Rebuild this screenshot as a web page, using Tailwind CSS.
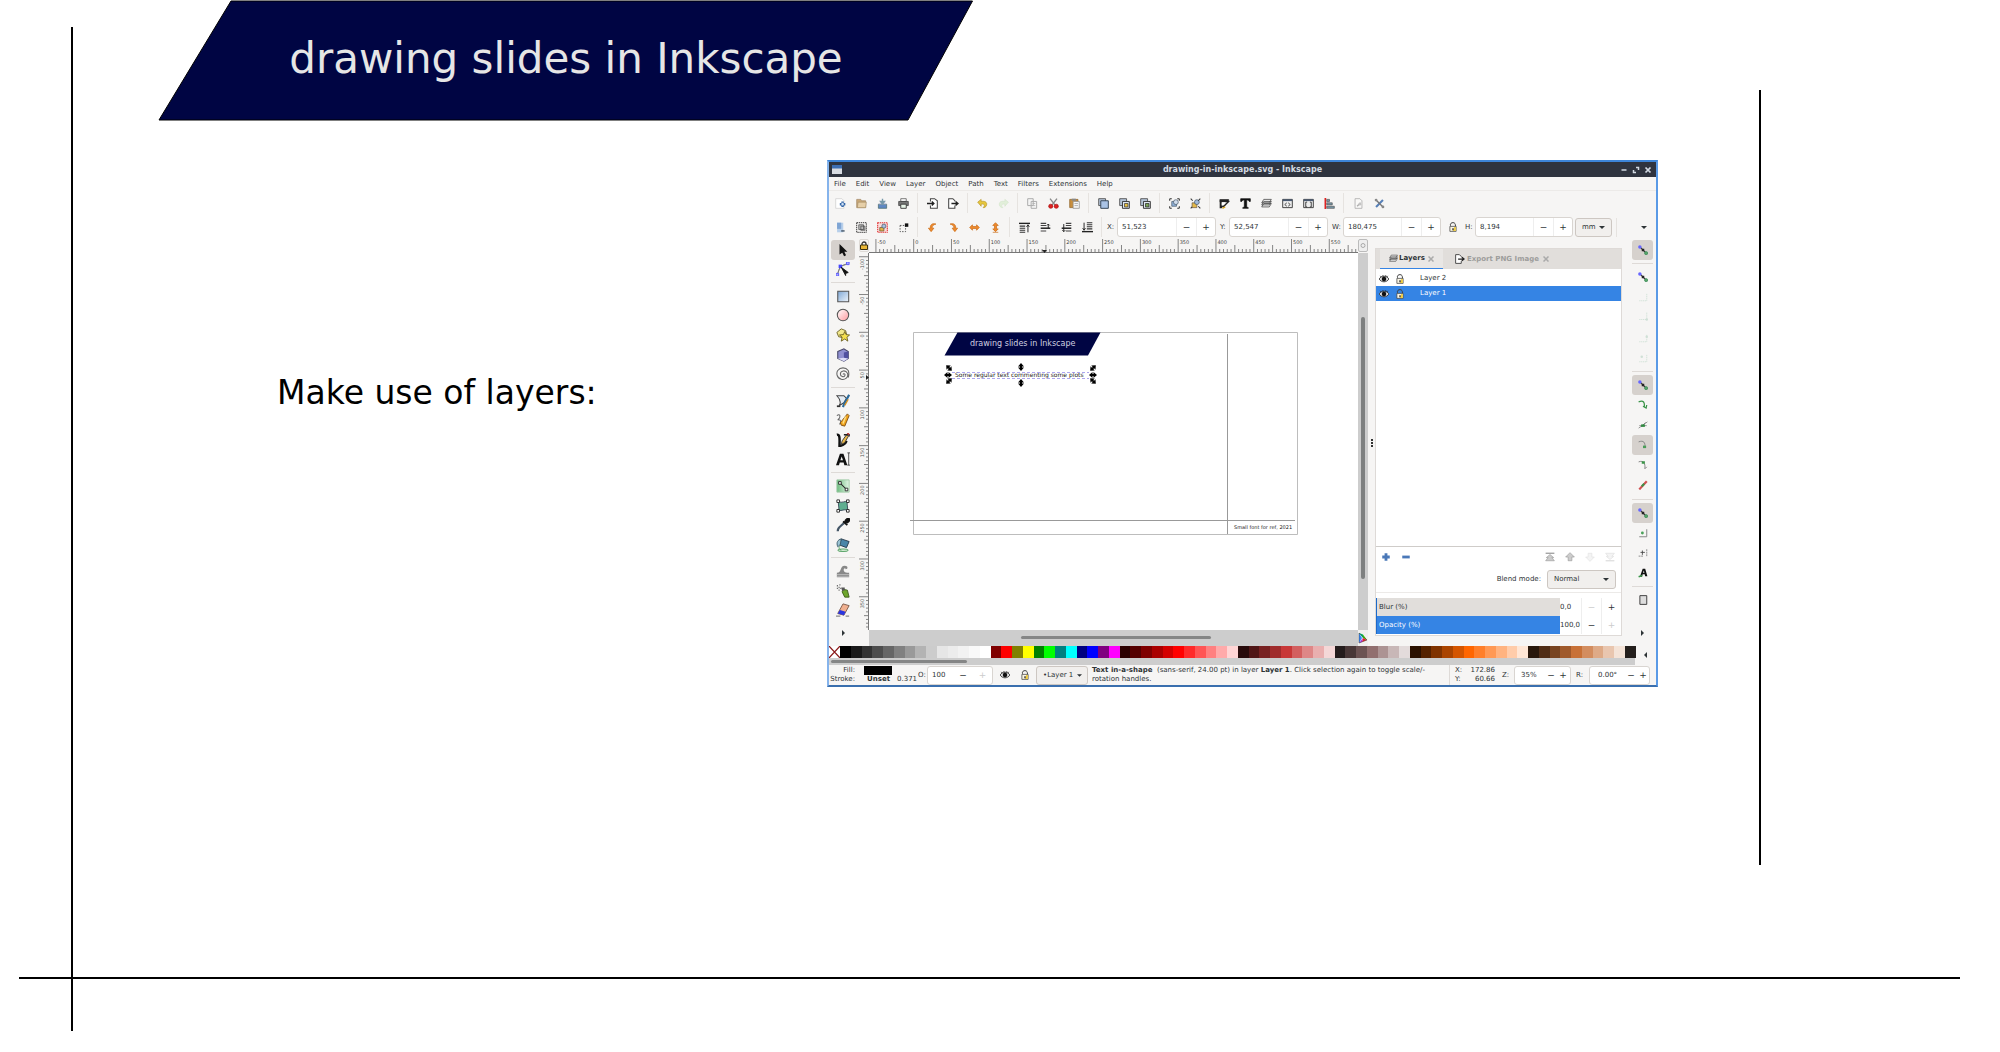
<!DOCTYPE html>
<html lang="en">
<head>
<meta charset="utf-8">
<title>drawing slides in Inkscape</title>
<script src="https://cdn.jsdelivr.net/npm/@tailwindcss/browser@4"></script>
</head>
<body class="relative min-h-screen overflow-x-hidden bg-white font-['DejaVu_Sans',sans-serif] text-black">

<!-- slide guide lines -->
<div class="absolute top-[27px] bottom-[21px] left-[71px] w-[2px] bg-black"></div>
<div class="absolute top-[90px] right-[239px] bottom-[187px] w-[2px] bg-black"></div>
<div class="absolute right-[40px] bottom-[73px] left-[19px] h-[2px] bg-black"></div>

<header class="relative ml-[158px] flex h-[121px] w-[816px] items-center justify-center">
  <svg class="absolute inset-0 h-full w-full" viewBox="0 0 816 121" aria-hidden="true"><path d="M73 1H814.500L750 120H1z" fill="#000543" stroke="#000" stroke-width="1"/></svg>
  <h1 class="relative pb-1 text-[42px] leading-[48px] whitespace-nowrap text-[#e6e6e6]">drawing slides in Inkscape</h1>
</header>

<main class="flex pt-[39px] pr-[342px] pl-[277px]">
  <p class="w-[550px] shrink-0 pt-[213px] text-[33px] leading-[40px]">Make use of layers:</p>

  <section class="min-w-0 flex-1 border-2 border-[#5a9ae6] border-t-[#3d85d8] border-b-[#3a6fae] border-l-[#86b4ec] bg-[#f6f5f4] text-[7px] leading-[9px] text-[#2e3436]">
    <!-- title bar -->
    <div class="relative flex h-[15px] items-center justify-center bg-[#2f343f] text-[8px] font-bold text-[#d3dae3]">
      <svg class="absolute left-[3px] h-[9px] w-[10px]" viewBox="0 0 10 9"><path d="M0 0h10v9H0z" fill="#d8dce2"/><path d="M0 0h10v3.500H0z" fill="#3d6fb4"/></svg>
      <span>drawing-in-inkscape.svg - Inkscape</span>
      <div class="absolute right-[4px] flex gap-[4px]" data-bar="winmin winmax winclose" data-kind="win"></div>
    </div>
    <nav class="flex h-[14px] items-center gap-[10px] border-b border-[#eceae8] pt-[2px] pl-[5px]">
      <button>File</button><button>Edit</button><button>View</button><button>Layer</button><button>Object</button><button>Path</button><button>Text</button><button>Filters</button><button>Extensions</button><button>Help</button>
    </nav>
    <!-- command bar -->
    <div class="flex h-[24px] items-center pl-[1px]" data-kind="cmd" data-bar="new open save print | import export | undo redo | copy cut paste | zoomsel zoomdraw zoompage | group ungroup | fill text layers xml selectors align | docprops prefs"></div>
    <!-- tool controls -->
    <div class="flex h-[24px] items-center pl-[1px]">
      <div class="flex h-full items-center" data-kind="cmd" data-bar="selall selbox seltouch deselect | rotl rotr fliph flipv | top raise lower bottom |"></div>
      <label for="fx" class="w-[11px] pl-[1px]">X:</label>
      <div class="flex h-[20px] w-[99px] rounded-[3px] border border-[#d9d5d1] bg-white"><input id="fx" value="51,523" class="w-[58px] pl-[4px] outline-none"><button class="w-[20px] border-l border-[#eee] text-[9px]">−</button><button class="w-[19px] border-l border-[#eee] text-[9px]">+</button></div>
      <label for="fy" class="w-[13px] pl-[4px]">Y:</label>
      <div class="flex h-[20px] w-[99px] rounded-[3px] border border-[#d9d5d1] bg-white"><input id="fy" value="52,547" class="w-[58px] pl-[4px] outline-none"><button class="w-[20px] border-l border-[#eee] text-[9px]">−</button><button class="w-[19px] border-l border-[#eee] text-[9px]">+</button></div>
      <label for="fw" class="w-[15px] pl-[4px]">W:</label>
      <div class="flex h-[20px] w-[98px] rounded-[3px] border border-[#d9d5d1] bg-white"><input id="fw" value="180,475" class="w-[57px] pl-[4px] outline-none"><button class="w-[20px] border-l border-[#eee] text-[9px]">−</button><button class="w-[19px] border-l border-[#eee] text-[9px]">+</button></div>
      <div class="flex w-[24px] justify-center" data-kind="small" data-bar="unlock"></div>
      <label for="fh" class="w-[10px]">H:</label>
      <div class="flex h-[20px] w-[98px] rounded-[3px] border border-[#d9d5d1] bg-white"><input id="fh" value="8,194" class="w-[57px] pl-[4px] outline-none"><button class="w-[20px] border-l border-[#eee] text-[9px]">−</button><button class="w-[19px] border-l border-[#eee] text-[9px]">+</button></div>
      <div class="relative ml-[2px] flex items-center">
        <select aria-label="Unit" class="h-[19px] w-[37px] appearance-none rounded-[3px] border border-[#cdc7c2] bg-[#f1efed] pl-[6px]"><option>mm</option></select>
        <svg class="pointer-events-none absolute right-[7px] h-[3px] w-[6px]" viewBox="0 0 6 3"><path d="M0 0h6L3 3z" fill="#2e3436"/></svg>
      </div>
      <span class="ml-[4px] h-[19px] w-px bg-[#e6e3e0]"></span>
      <svg class="mr-[9px] ml-auto h-[3px] w-[6px]" viewBox="0 0 6 3"><path d="M0 0h6L3 3z" fill="#2e3436"/></svg>
    </div>

    <!-- work area -->
    <div class="flex h-[407px]">
      <div class="flex w-[28px] shrink-0 flex-col pt-px pl-[2px]" data-kind="tool" data-bar="*pointer node | rect circle star box3d spiral | pencil bezier calli texttool | gradient mesh dropper bucket | tweak spray eraser > "></div>

      <div class="flex min-w-0 flex-1 flex-col">
        <div class="flex h-[14px]">
          <button aria-label="Lock guides" class="ml-[2px] flex h-[13px] w-[10px] items-center justify-center rounded-[2px] border border-[#dedad6]"><svg class="h-[9px] w-[8px]" viewBox="0 0 8 9"><path d="M2 4V3a2 2 0 0 1 4 0v1" fill="none" stroke="#333" stroke-width="1.300"/><path d="M.5 4h7v4.500h-7z" fill="#e8b636" stroke="#3a3010"/></svg></button>
          <svg id="hruler" class="h-full min-w-0 flex-1"></svg>
          <button aria-label="Zoom" class="flex h-[13px] w-[10px] items-center justify-center rounded-[2px] border border-[#bbb] bg-[#eee]"><svg class="h-[6px] w-[6px]" viewBox="0 0 6 6"><circle cx="3" cy="2.500" r="2" fill="none" stroke="#999" stroke-width=".8"/></svg></button>
        </div>
        <div class="flex min-h-0 flex-1">
          <svg id="vruler" class="h-full w-[12px] shrink-0"></svg>
          <div class="flex min-w-0 flex-1 flex-col">
            <svg class="min-h-0 w-full flex-1 bg-white" font-family="DejaVu Sans, sans-serif">
              <path d="M44.500 79.500H428.500V281.500H44.500z" fill="none" stroke="#bdbdbd"/>
              <path d="M358.500 81V281M41 267.500H426" fill="none" stroke="#999"/>
              <path d="M88.500 79.500H231.500L219 102.500H75.500z" fill="#000543"/>
              <text x="101" y="93" font-size="8" fill="#d0d0e0">drawing slides in Inkscape</text>
              <text x="86" y="124" font-size="6" fill="#222">Some regular text commenting some plots</text>
              <path d="M83 119.500H220M83 125.500H220" stroke="#8a80e8" stroke-width=".7" stroke-dasharray="3 2"/>
              <g id="handles"></g>
              <text x="365" y="276" font-size="5" fill="#222">Small font for ref, 2021</text>
            </svg>
            <div class="h-[16px] bg-[#cdcdcd] pt-[6px]"><div class="ml-[31%] h-[3px] w-[39%] rounded-full bg-[#858686]"></div></div>
          </div>
          <div class="flex w-[10px] shrink-0 flex-col bg-[#cdcdcd]">
            <div class="mx-auto mt-[64px] h-[262px] w-[4px] rounded-full bg-[#7e8080]"></div>
            <svg class="mt-auto h-[16px] w-[10px] bg-[#f0efee]" viewBox="0 0 10 16"><path d="M1 3l3 5-3 5z" fill="#38f"/><path d="M1 3l4 1.500L5 8z" fill="#0b6"/><path d="M5 4.500L9 10 5 8z" fill="#4c0"/><path d="M9 10l-5 2 1-4z" fill="#e22"/><path d="M1 13l4-5-1 4z" fill="#a3d"/><path d="M1 3l8 7-8 3z" fill="none" stroke="#333" stroke-width=".5"/></svg>
          </div>
        </div>
      </div>

      <div class="flex w-[7px] shrink-0 items-center justify-center"><svg class="h-[8px] w-[2px]" viewBox="0 0 2 8"><path d="M0 0h2v2H0zM0 3h2v2H0zM0 6h2v2H0z" fill="#333"/></svg></div>

      <!-- layers dialog -->
      <div class="mt-[9px] mb-[10px] flex w-[247px] shrink-0 flex-col border border-[#dedad7] bg-white">
        <div class="flex h-[20px] bg-[#e1dedb] pl-[4px] font-bold">
          <button class="flex w-[63px] items-center justify-center gap-[1px] border-b border-[#3584e4] bg-[#e9e7e5]"><svg class="h-[9px] w-[9px]" viewBox="0 0 16 16"><use href="#i-layers"/></svg>Layers<svg class="ml-[2px] h-[6px] w-[6px]" viewBox="0 0 6 6"><path d="M.5 .5l5 5M5.500 .5l-5 5" stroke="#aaa" stroke-width="1.500"/></svg></button>
          <button class="ml-[12px] flex items-center gap-[2px] text-[#9d9d9b]"><svg class="h-[10px] w-[10px]" viewBox="0 0 16 16"><use href="#i-export"/></svg>Export PNG Image<svg class="ml-[2px] h-[6px] w-[6px]" viewBox="0 0 6 6"><path d="M.5 .5l5 5M5.500 .5l-5 5" stroke="#aaa" stroke-width="1.500"/></svg></button>
        </div>
        <ul class="flex-1 border-b border-[#cfccc9] pt-[2px]">
          <li class="flex h-[15px] items-center"><div class="flex w-[44px] gap-[6px] pl-[3px]" data-kind="small" data-bar="eye unlock"></div>Layer 2</li>
          <li class="flex h-[15px] items-center bg-[#3584e4] text-white"><div class="flex w-[44px] gap-[6px] pl-[3px]" data-kind="small" data-bar="eye unlock"></div>Layer 1</li>
        </ul>
        <div class="flex h-[19px] items-center pl-[5px]">
          <div class="flex gap-[10px]" data-kind="small" data-bar="plus minus"></div>
          <div class="mr-[6px] ml-auto flex gap-[10px]" data-kind="small" data-bar="ltop lup ldown lbottom"></div>
        </div>
        <div class="flex h-[27px] items-center justify-end border-b border-[#eceae8] pr-[5px]">
          <label for="blend" class="mr-[6px]">Blend mode:</label>
          <div class="relative flex items-center">
            <select id="blend" class="h-[19px] w-[69px] appearance-none rounded-[3px] border border-[#cdc7c2] bg-[#f1efed] pl-[6px]"><option>Normal</option></select>
            <svg class="pointer-events-none absolute right-[7px] h-[3px] w-[6px]" viewBox="0 0 6 3"><path d="M0 0h6L3 3z" fill="#2e3436"/></svg>
          </div>
        </div>
        <div class="mt-[5px] flex h-[18px]"><label for="blur" class="flex w-[184px] items-center border-l border-[#1b6acb] bg-[#e1dedb] pl-[2px]">Blur (%)</label><input id="blur" value="0,0" class="w-[21px] outline-none"><button class="w-[20px] border-l border-[#eee] text-[9px] text-[#ccc]">−</button><button class="w-[20px] border-l border-[#eee] text-[9px]">+</button></div>
        <div class="mb-px flex h-[18px]"><label for="opac" class="flex w-[184px] items-center border-l border-[#1b6acb] bg-[#3584e4] pl-[2px] text-white">Opacity (%)</label><input id="opac" value="100,0" class="w-[21px] outline-none"><button class="w-[20px] border-l border-[#eee] text-[9px]">−</button><button class="w-[20px] border-l border-[#eee] text-[9px] text-[#ccc]">+</button></div>
      </div>

      <div class="ml-[10px] flex w-[24px] shrink-0 flex-col pt-px pr-[3px]" data-kind="snap" data-bar="*snap | snap corner1 corner2 corner3 corner4 | *snap curve cross *curveg curveh slash | *snap cbox cplus atext | page >>"></div>
    </div>

    <!-- palette -->
    <div class="flex h-[19px]">
      <div class="flex min-w-0 flex-1 flex-col">
        <div id="palette" class="flex h-[12px]"><svg class="h-[12px] w-[11px] shrink-0 bg-white" viewBox="0 0 11 12"><path d="M0 0l11 12M11 0L0 12" stroke="#8b1a1a" stroke-width="1.200"/></svg></div>
        <div class="flex-1 bg-[#cdcdcd] pt-[2px]"><div class="ml-[2px] h-[3px] w-[136px] rounded-full bg-[#858686]"></div></div>
      </div>
      <svg class="mt-[6px] mr-[9px] ml-[9px] h-[6px] w-[3px]" viewBox="0 0 3 6"><path d="M3 0v6L0 3z" fill="#2e3436"/></svg>
    </div>

    <!-- status bar -->
    <div class="flex h-[20px] items-center overflow-hidden">
      <div class="grid shrink-0 grid-cols-[26px_32px_21px] items-center gap-x-[5px]">
        <span class="text-right">Fill:</span><span class="h-[9px] w-[28px] justify-self-end bg-black"></span><span></span>
        <span class="justify-self-end">Stroke:</span><b class="justify-self-end pr-[2px]">Unset</b><span>0.371</span>
      </div>
      <label for="op" class="w-[9px] shrink-0">O:</label>
      <div class="flex h-[19px] w-[66px] shrink-0 rounded-[3px] border border-[#d9d5d1] bg-white"><input id="op" value="100" class="w-[25px] pl-[4px] outline-none"><button class="w-[20px] text-[9px]">−</button><button class="w-[19px] text-[9px] text-[#ccc]">+</button></div>
      <div class="ml-[7px] flex w-[36px] shrink-0 gap-[10px]" data-kind="small" data-bar="eye unlock"></div>
      <div class="relative flex shrink-0 items-center">
        <select aria-label="Current layer" class="h-[19px] w-[52px] appearance-none rounded-[3px] border border-[#cdc7c2] bg-[#f1efed] pl-[6px]"><option>•Layer 1</option></select>
        <svg class="pointer-events-none absolute right-[6px] h-[3px] w-[5px]" viewBox="0 0 6 3"><path d="M0 0h6L3 3z" fill="#2e3436"/></svg>
      </div>
      <p class="ml-[4px] flex-1 whitespace-nowrap"><b>Text in-a-shape</b>&nbsp; (sans-serif, 24.00 pt) in layer <b>Layer 1</b>. Click selection again to toggle scale/-<br>rotation handles.</p>
      <div class="grid h-full w-[53px] shrink-0 grid-cols-[10px_30px] content-center border-l border-[#dedad7] pl-[5px]"><span>X:</span><span class="text-right">172.86</span><span>Y:</span><span class="text-right">60.66</span></div>
      <label for="zoom" class="w-[12px]">Z:</label>
      <div class="flex h-[19px] w-[57px] shrink-0 rounded-[3px] border border-[#d9d5d1] bg-white"><input id="zoom" value="35%" class="w-[30px] pl-[6px] outline-none"><button class="w-[12px] text-[9px]">−</button><button class="w-[12px] text-[9px]">+</button></div>
      <label for="rot" class="w-[18px] pl-[5px]">R:</label>
      <div class="mr-[6px] flex h-[19px] w-[61px] shrink-0 rounded-[3px] border border-[#d9d5d1] bg-white"><input id="rot" value="0.00°" class="w-[35px] pl-[8px] outline-none"><button class="w-[12px] text-[9px]">−</button><button class="w-[12px] text-[9px]">+</button></div>
    </div>
  </section>
</main>

<svg class="absolute h-0 w-0" aria-hidden="true">
  <linearGradient id="gb" x1="0" y1="0" x2="1" y2="1"><stop stop-color="#7fa8d6"/><stop offset="1" stop-color="#eef4fb"/></linearGradient>
  <linearGradient id="gr" x1="0" y1="0" x2="1" y2="1"><stop stop-color="#fff"/><stop offset="1" stop-color="#ff9a9f"/></linearGradient>
  <linearGradient id="gg" x1="0" y1="0" x2="1" y2="0"><stop stop-color="#6dbb7e"/><stop offset="1" stop-color="#e2f5e5"/></linearGradient>
  <symbol id="i-layers" viewBox="0 0 16 16"><path d="M4 8h11l-3 5H1zM4 5h11l-3 5H1zM4 2h11l-3 5H1z" fill="#eee" stroke="#444" stroke-width="1.100"/></symbol>
  <symbol id="i-export" viewBox="0 0 16 16"><path d="M10 5V4L7 1H1v14h9v-4" fill="#fff" stroke="#444" stroke-width="1.500"/><path d="M5 8h9M11 5l3.500 3-3.500 3" fill="none" stroke="#222" stroke-width="2"/></symbol>
</svg>

<script>
const page = '<path d="M3 1h7l3 3v11H3z" fill="#fff" stroke="#555" stroke-width="1.2"/>';
const win = '<path d="M1 2h14v12H1z" fill="#eee" stroke="#333" stroke-width="1.3"/><path d="M1 2h14v2.500H1z" fill="#4a5a72"/>';
const zoomBack = '<path d="M1 1h10v10H1z" fill="#b8c8dc" stroke="#444" stroke-width="1.2"/><path d="M5 5h10v10H5z" fill="#dfe8f3" stroke="#333" stroke-width="1.4"/>';
const shapes = '<path d="M4 5h7v7H4z" fill="#8fb0d8" stroke="#456" /><circle cx="10" cy="6" r="3.500" fill="#cfdcec" stroke="#456"/>';
const corner = 'fill="none" stroke="#cfe0d6" stroke-width="1.4" stroke-dasharray="2 1"';
const icons = {
  winmin: '<path d="M3 8h10" stroke="#d3dae3" stroke-width="3"/>',
  winmax: '<path d="M8 3h5v5M8 13H3V8" fill="none" stroke="#d3dae3" stroke-width="3"/>',
  winclose: '<path d="M3 3l10 10M13 3L3 13" stroke="#d3dae3" stroke-width="3.500"/>',
  new: '<path d="M1 1h9l3 3v11H1z" fill="#fff" stroke="#ccc"/><path d="M11 5v8M7 9h8" stroke="#3567a8" stroke-width="3.500"/><path d="M11 7v4M9 9h4" stroke="#cfe0f5" stroke-width="1.8"/>',
  open: '<path d="M1 2h6l1 2h6v10H1z" fill="#c9a878" stroke="#a08560"/><path d="M3 6h12l-1 8H2z" fill="#e6cfa8" stroke="#a8906a"/>',
  save: '<path d="M2 9h12v6H2z" fill="#5f88c4" stroke="#466"/><path d="M2 9l2-2h8l2 2" fill="#ccd"/><path d="M8 1v4M5 5h6L8 9z" stroke="#79a" stroke-width="2" fill="#79a"/>',
  print: '<path d="M4 1h8v4H4z" fill="#fff" stroke="#444"/><path d="M1 5h14v6H1z" fill="#777" stroke="#333"/><path d="M4 9h8v6H4z" fill="#e8f4e8" stroke="#333" stroke-width="1.3"/>',
  import: '<path d="M5 5V1h6l4 3v11H5v-4" fill="#fff" stroke="#444" stroke-width="1.5"/><path d="M0 8h9M7 5l3 3-3 3" fill="none" stroke="#222" stroke-width="2"/>',
  export: '<use href="#i-export"/>',
  undo: '<path d="M1 6l5-4v3c5-1 9 1 8 5-1 4-4 4-5 4 3-3 2-6-3-5v3z" fill="#e6c63c" stroke="#b8962a"/>',
  redo: '<path d="M15 6l-5-4v3c-5-1-9 1-8 5 1 4 4 4 5 4-3-3-2-6 3-5v3z" fill="#e2efda" stroke="#d5e6cc"/>',
  copy: '<path d="M1 1h8v10H1zM6 5h8v10H6z" fill="#f4f4f4" stroke="#aaa" stroke-width="1.4"/><path d="M8 8h4M8 11h4" stroke="#aaa"/>',
  cut: '<path d="M3 1l7 9M13 1l-7 9" stroke="#888" stroke-width="2"/><ellipse cx="4" cy="12" rx="3" ry="3" fill="#d22" stroke="#a11"/><ellipse cx="12" cy="12" rx="3" ry="3" fill="#d22" stroke="#a11"/>',
  paste: '<path d="M1 2h12v12H1z" fill="#c98f3e" stroke="#8a6226"/><path d="M4 1h6v3H4z" fill="#888"/><path d="M6 5h9v10H6z" fill="#f4f4f4" stroke="#888"/><path d="M8 8h5M8 11h5" stroke="#999"/>',
  zoomsel: '<path d="M1 1h10v10H1z" fill="#b8c8dc" stroke="#444" stroke-width="1.2"/><path d="M4 4h11v11H4z" fill="#a9c3e6" stroke="#345" stroke-width="1.4"/>',
  zoomdraw: zoomBack + '<path d="M8 8h5v5H8z" fill="#e8c040" stroke="#333"/>',
  zoompage: zoomBack + '<path d="M8 8h5v5H8z" fill="#7aa65a" stroke="#222"/>',
  group: shapes + '<path d="M1 1h3M1 1v3M15 15h-3M15 15v-3M15 1h-3M15 1v3M1 15h3M1 15v-3" stroke="#333" stroke-width="1.5"/>',
  ungroup: '<path d="M3 7h7v7H3z" fill="#e3b84a" stroke="#654"/><circle cx="10" cy="6" r="3.500" fill="#9fb8da" stroke="#456"/><path d="M1 1l3 3M15 15l-3-3M15 1l-3 3M1 15l2-2" stroke="#333" stroke-width="1.5"/>',
  fill: '<path d="M1 2h13v4H1z" fill="#222"/><path d="M1 2v13h3l3-4H4V6h7l4-4z" fill="#222"/><path d="M4 6h6l-5 5H4z" fill="#fff"/><path d="M15 4L6 13" stroke="#222" stroke-width="2"/><path d="M5 15l4-2" stroke="#d9a520" stroke-width="2"/>',
  text: '<path d="M1 1h14v4h-1.500L12 3H9.700v10l2.300 1v1H4v-1l2.300-1V3H4L2.500 5H1z" fill="#111" stroke="#111"/>',
  layers: '<use href="#i-layers"/>',
  xml: win + '<path d="M7 7L4 9.500 7 12M9 7l3 2.500L9 12" fill="none" stroke="#333" stroke-width="1.2"/>',
  selectors: win + '<path d="M6 6H4v7h2M10 6h2v7h-2" fill="none" stroke="#333" stroke-width="1.3"/>',
  align: '<path d="M2 0v16" stroke="#d22" stroke-width="2.500"/><path d="M4 2h4v3H4zM4 7h8v3H4zM4 12h11v3H4z" fill="#79a" stroke="#555"/>',
  docprops: '<g opacity=".45">' + page + '<path d="M6 12l5-5" stroke="#555" stroke-width="2"/><circle cx="10" cy="9" r="2" fill="#888"/></g>',
  prefs: '<path d="M3 13L13 3" stroke="#567fb8" stroke-width="3"/><path d="M3 3l10 10" stroke="#777" stroke-width="2"/><circle cx="3" cy="3" r="2" fill="#888"/><circle cx="13" cy="13" r="2" fill="#888"/>',
  selall: '<path d="M3 1h9v14H3z" fill="#b7cfea"/><path d="M3 1h6v9H3z" fill="#7fa5d4"/><path d="M9 12h5v2H9z" fill="#456"/>',
  selbox: '<path d="M1 1h14v14H1z" fill="none" stroke="#222" stroke-width="1.3" stroke-dasharray="2 1"/><path d="M4 4h7v7H4zM7 6h6v6H7z" fill="#bbb" stroke="#444"/>',
  seltouch: '<path d="M1 1h14v14H1z" fill="#fbdcdc" stroke="#e03030" stroke-width="1.5" stroke-dasharray="2 1"/><path d="M4 8h6v5H4z" fill="#e2b646" stroke="#653"/><circle cx="10" cy="6" r="3" fill="#a9c0de" stroke="#456"/>',
  deselect: '<path d="M3 5h8v9H3z" fill="none" stroke="#444" stroke-width="1.3" stroke-dasharray="2 2"/><path d="M10 2h5v5h-5z" fill="#111"/>',
  rotl: '<path d="M13 3C8 1 4 4 5 9H2l4 5 4-5H7.500C7 6 9 4 13 3z" fill="#ef8a2c" stroke="#c96a14"/>',
  rotr: '<path d="M3 3c5-2 9 1 8 6h3l-4 5-4-5h2.500C9 6 7 4 3 3z" fill="#ef8a2c" stroke="#c96a14"/>',
  fliph: '<path d="M1 8l4-4v2.500h6V4l4 4-4 4V9.500H5V12z" fill="#ef8a2c" stroke="#c96a14"/>',
  flipv: '<path d="M8 1l4 4H9.500v5H12l-4 4-4-4h2.500V5H4z" fill="#ef8a2c" stroke="#c96a14"/><path d="M4 15h8" stroke="#c96a14"/>',
  top: '<path d="M0 2h16" stroke="#222" stroke-width="2"/><path d="M1 6h8M1 9h8M1 12h8M1 15h8" stroke="#333" stroke-width="1.6"/><path d="M13 15V5M11 7l2-3 2 3" stroke="#222" stroke-width="1.4" fill="none"/>',
  raise: '<path d="M1 2h8M1 5h8M1 13h8" stroke="#444" stroke-width="1.6"/><path d="M1 9h14" stroke="#111" stroke-width="2"/><path d="M12 9V3M10 5l2-2 2 2" stroke="#222" stroke-width="1.4" fill="none"/>',
  lower: '<path d="M7 2h8M7 5h8M7 13h8" stroke="#444" stroke-width="1.6"/><path d="M1 9h14" stroke="#111" stroke-width="2"/><path d="M4 3v11M2 12l2 2 2-2" stroke="#222" stroke-width="1.4" fill="none"/>',
  bottom: '<path d="M0 14h16" stroke="#222" stroke-width="2"/><path d="M7 1h8M7 4h8M7 7h8M7 10h8" stroke="#333" stroke-width="1.6"/><path d="M3 1v10M1 9l2 3 2-3" stroke="#222" stroke-width="1.4" fill="none"/>',
  unlock: '<path d="M4 6c-1-4 2-5 4-5 3 0 4 2 4 6" fill="none" stroke="#444" stroke-width="1.6"/><path d="M3 7h10v8H3z" fill="#f8f4e4" stroke="#444" stroke-width="1.2"/><path d="M10 8h2.500v6.500H8z" fill="#f0cc40"/><path d="M7 10h2v3H7z" fill="#222"/>',
  eye: '<path d="M0 8c4-6 12-6 16 0-4 6-12 6-16 0z" fill="#ddd" stroke="#333" stroke-width="1.4"/><circle cx="8" cy="8" r="3.600" fill="#111"/><path d="M2 3l2 2M6 2l1 2M11 2l-1 2M14 3l-2 2" stroke="#222" stroke-width="1.4"/>',
  pointer: '<path d="M4 1l9 9H9.500l2 4-2.300 1-2-4L4 13z" fill="#111"/>',
  node: '<path d="M2 14C3 7 6 3 14 2M5 5l9-3M5 5L2 13" fill="none" stroke="#777"/><path d="M3 3h4v4H3z" fill="#44f"/><path d="M12 0h3v3h-3zM0 13h3v3H0z" fill="#aaf" stroke="#55f"/><path d="M6 6l8 6-3 1 0 2.500z" fill="#111" stroke="#111"/>',
  rect: '<path d="M2 2.500h12.500v12H2z" fill="url(#gb)" stroke="#555" stroke-width="1.2"/>',
  circle: '<circle cx="8" cy="8" r="6.500" fill="url(#gr)" stroke="#555" stroke-width="1.2"/>',
  star: '<path d="M6 1l5 2 1 4-4 4-5-1-2-5z" fill="#f3e98c" stroke="#665c20"/><path d="M10 4l1.500 3.500 4 .5-3 2.500 1 4.500-3.500-2.500L6 15l1-4.500L4 8l4.500-.5z" fill="#f5e04e" stroke="#665c20"/>',
  box3d: '<path d="M2 4l7-3 5 3v8l-5 3-7-3z" fill="#8f8fd0" stroke="#446" stroke-width="1.2"/><path d="M9 5l5-1v8l-5 3z" fill="#5050a0"/><path d="M9 11l5 1-5 3-7-3z" fill="#dcdcf8"/>',
  spiral: '<path d="M8 8.500c1-2 3 0 2 1.500-1 2-5 1-5-2 0-4 6-5 8-1 2 5-3 8-7 7-5-1-6-7-4-10 3-4 9-4 12 0 1 3 1 5 0 8" fill="none" stroke="#666" stroke-width="1.2"/>',
  pencil: '<path d="M1 2h8l3 3-3 5-5 3c2-4 1-7-3-11z" fill="#e4ecf4" stroke="#444" stroke-width="1.2"/><path d="M15 1L9 12l-1 3" stroke="#2b6a9a" stroke-width="2.500"/><path d="M14 6l-4 7" stroke="#d89020" stroke-width="1.5"/><path d="M1 14h4" stroke="#333" stroke-width="2"/>',
  bezier: '<path d="M1 3c4-3 5 2 1 5 3-1 5 2 2 5" fill="none" stroke="#666" stroke-width="1.2"/><path d="M13 1l2 2-5 12-4-1-1-3z" fill="#f2a51d" stroke="#7a4a10"/><path d="M11 4L8 12" stroke="#fbe08a" stroke-width="1.8"/>',
  calli: '<path d="M1 2c4-1 3 7 3 13 4-1 7-3 8-6" fill="none" stroke="#111" stroke-width="2.800"/><path d="M12 2L7 9l-1 4 4-2 4-7z" fill="#e8b84a" stroke="#333"/><path d="M9 2h6v2" fill="none" stroke="#222" stroke-width="1.6"/><path d="M13 0l2 2" stroke="#b33" stroke-width="2"/>',
  texttool: '<path d="M0 15L4.500 2h4L13 15H9.600l-.9-3H4.300l-.9 3zM5 9.500h3L6.500 5z" fill="#111"/><path d="M14.500 1v14M13 1h3M13 15h3" stroke="#444" stroke-width="1"/>',
  gradient: '<path d="M1 1h14v14H1z" fill="url(#gg)" stroke="#9cc8a4"/><path d="M5 5l7 7" stroke="#222" stroke-width="1.2"/><path d="M3 3h3v3H3zM10.500 10.500h3v3h-3z" fill="#fff" stroke="#222"/>',
  mesh: '<path d="M3 3c4 2 7-1 10 0-1 4 1 6 0 10-4-2-6 1-10 0 1-4-1-6 0-10z" fill="#5fae90" stroke="#345"/><path d="M1 1h3v3H1zM12 1h3v3h-3zM1 12h3v3H1zM12 12h3v3h-3z" fill="#fff" stroke="#222"/>',
  dropper: '<path d="M2 15c0-3 1-4 7-9" stroke="#456" stroke-width="2.600" fill="none"/><path d="M8 4l5 4M10 5c1-4 4-5 5-4 1 2-1 4-4 5z" stroke="#111" stroke-width="2" fill="#111"/>',
  bucket: '<ellipse cx="8" cy="14" rx="6" ry="1.500" fill="#cfe8cf" stroke="#4a9a5a"/><path d="M6 1l9 3-3 7-8-3z" fill="#4a86a8" stroke="#234"/><path d="M6 1C2 2 0 5 2 10c1-1 2-1 3-3z" fill="#9cc4d4" stroke="#356"/><path d="M5 9c-3 2-1 4 1 5" fill="none" stroke="#4a9a5a"/>',
  tweak: '<path d="M1 10c6 0 3-8 9-8 4 0 4 4 1 4 0-2-3-1-2 2 1 2 3 2 6 2v5H1z" fill="#888"/><path d="M1 12h14M1 14h14" stroke="#bbb"/>',
  spray: '<path d="M8 6l5 1 2 8-5 0-3-6z" fill="#6ea62c" stroke="#3a5a18"/><path d="M6 4l4 0 0 3-3 1z" fill="#555"/><path d="M1 2h1M3 4h1M1 5h1M4 1h1M3 7h1M5 5h1" stroke="#444" stroke-width="1.500"/>',
  eraser: '<path d="M8 1l7 2-6 11-7-2z" fill="#f0b090" stroke="#754"/><path d="M4.500 8l6.500 2-2 4-7-2z" fill="#2a36e0"/><path d="M0 15h5M11 15h4" stroke="#888" stroke-width="1.3"/>',
  snap: '<path d="M3 3l10 10" stroke="#333" stroke-width="2"/><circle cx="3" cy="3" r="2.800" fill="#66f"/><path d="M6 6h4v4H6z" fill="#222"/><circle cx="13" cy="13" r="2.500" fill="#5aa56a" stroke="#385"/>',
  corner1: `<path d="M2 14h12V3" ${corner}/>`,
  corner2: `<path d="M2 12h12V1" ${corner}/><circle cx="14" cy="12" r="2" fill="#cfe0d6"/>`,
  corner3: `<path d="M2 14h12V3" ${corner}/><circle cx="14" cy="6" r="2" fill="#cfe0d6"/>`,
  corner4: `<path d="M2 14h12V3" ${corner}/><circle cx="6" cy="6" r="2" fill="#cfe0d6"/>`,
  curve: '<path d="M1 3c8-3 10 1 9 8M8 10l5 3 1-5" fill="none" stroke="#3a9448" stroke-width="2"/>',
  curveg: '<path d="M1 3c8-3 11 1 10 9" fill="none" stroke="#888" stroke-width="1.6"/><path d="M8 9h5v4H8z" fill="#4a9c58"/>',
  curveh: '<path d="M1 3c8-3 11 3 10 11l3-3" fill="none" stroke="#888" stroke-width="1.6"/><path d="M6 2h5v4H6z" fill="#3a9448"/>',
  cross: '<path d="M1 13L15 3M5 11l7-7M2 9h12" stroke="#777" stroke-width="1.2"/><path d="M5 7h6v4H5z" fill="#2f8a40"/>',
  slash: '<path d="M2 15L14 2" stroke="#d05050" stroke-width="3.500"/><path d="M6 10l4-4" stroke="#3a9448" stroke-width="3"/>',
  cbox: '<path d="M2 14h12V2" fill="none" stroke="#888" stroke-width="1.6"/><circle cx="7" cy="8" r="2.300" fill="#4aa25a"/>',
  cplus: '<path d="M1 13h8M14 2v12" stroke="#888" stroke-width="1.5" stroke-dasharray="3 1"/><path d="M7 4v7M4 7h7" stroke="#444" stroke-width="1.4"/>',
  atext: '<path d="M3 14L7.500 1h4L15 13h-3.500l-.8-3H7.500l-1.200 4zM8 7.500h2.300L9.300 4z" fill="#111"/><path d="M1 14l6-2" stroke="#3a9448" stroke-width="2.500"/>',
  page: '<path d="M3 1h11v14H3z" fill="#ddd" stroke="#444" stroke-width="1.6"/>',
  plus: '<path d="M8 2v12M2 8h12" stroke="#4a78b8" stroke-width="4.500"/>',
  minus: '<path d="M2 8h12" stroke="#4a78b8" stroke-width="4.500"/>',
  ltop: '<path d="M1 2h14" stroke="#999" stroke-width="2"/><path d="M8 4l6 5h-3l4 5H1l4-5H2z" fill="#ccc" stroke="#999"/>',
  lup: '<path d="M8 1l7 7h-4v6H5V8H1z" fill="#ccc" stroke="#999"/>',
  ldown: '<path d="M8 15L1 8h4V2h6v6h4z" fill="#f4f4f4" stroke="#e0e0e0"/>',
  lbottom: '<path d="M1 14h14" stroke="#ddd" stroke-width="2"/><path d="M8 12L2 7h3L1 2h14l-4 5h3z" fill="#f4f4f4" stroke="#ddd"/>'
};

const kinds = {
  win:   { btn: 'flex items-center justify-center', svg: 'h-[8px] w-[8px]', sep: '' },
  small: { btn: 'flex items-center justify-center', svg: 'h-[10px] w-[10px]', sep: '' },
  cmd:   { btn: 'flex h-[20px] w-[21px] items-center justify-center', svg: 'h-[11px] w-[11px]', sep: 'mr-[4px] ml-[3px] h-[20px] w-px bg-[#e6e3e0]' },
  tool:  { btn: 'flex w-[24px] flex-1 items-center justify-center rounded-[3px]', svg: 'h-[14px] w-[14px]', sep: 'my-[3px] h-px w-[24px] bg-[#dedad7]' },
  snap:  { btn: 'flex w-[21px] flex-1 items-center justify-center rounded-[3px]', svg: 'h-[10px] w-[10px]', sep: 'my-[3px] h-px w-[21px] bg-[#dedad7]' }
};
document.querySelectorAll('[data-bar]').forEach(bar => {
  const k = kinds[bar.dataset.kind];
  bar.innerHTML = bar.dataset.bar.trim().split(/\s+/).map(t => {
    if (t === '|') return `<span class="${k.sep}"></span>`;
    if (t[0] === '>') return `<button aria-label="More" class="${t === '>' ? 'flex h-[26px] w-[24px] items-center justify-center' : 'flex h-[36px] w-[21px] items-end justify-center pb-[10px]'}"><svg class="h-[6px] w-[3px]" viewBox="0 0 3 6"><path d="M0 0v6l3-3z" fill="#2e3436"/></svg></button>`;
    const on = t[0] === '*', name = on ? t.slice(1) : t;
    return `<button aria-label="${name}" class="${k.btn} ${on ? 'bg-[#d6d1cd]' : ''}"><svg class="${k.svg}" viewBox="0 0 16 16" fill="none">${icons[name]}</svg></button>`;
  }).join('');
});

// rulers: one major tick every 50 units
const step = 37.78;
let h = '', v = '';
for (let i = -10; i <= 119; i++) {
  const x = 44.700 + i * step / 10;
  if (x < 0 || x > 489) continue;
  const y = i % 10 === 0 ? 0 : i % 5 === 0 ? 6 : 10;
  h += `<path d="M${x} ${y}V14" stroke="#777" stroke-width=".9"/>`;
  if (y === 0) h += `<text x="${x + 1.5}" y="5" font-size="5" fill="#444">${i * 5}</text>`;
}
document.getElementById('hruler').innerHTML = h + '<path d="M0 13.500H489" stroke="#777"/><path d="M173 11h5l-2.500 3z" fill="#222"/>';
for (let i = -20; i <= 79; i++) {
  const y = 79.300 + i * step / 10;
  if (y < 0 || y > 377) continue;
  const x = i % 10 === 0 ? 2 : i % 5 === 0 ? 7 : 9;
  v += `<path d="M${x} ${y}H12" stroke="#777" stroke-width=".9"/>`;
  if (x === 2) v += `<text transform="translate(7 ${y + 2}) rotate(-90)" text-anchor="end" font-size="5" fill="#555">${i * 5}</text>`;
}
document.getElementById('vruler').innerHTML = v + '<path d="M11.500 0V377" stroke="#777"/><path d="M9 122v5l3-2.500z" fill="#222"/>';

// selection handles
const arrow = '<path d="M-4 0l3.500-3v2h1v-2L4 0 .5 3V1h-1v2z" fill="#000"/>';
document.getElementById('handles').innerHTML = [[80,115,45],[152,114,90],[224,115,-45],[79,122,0],[224,122,0],[80,128,-45],[152,130,90],[224,128,45]]
  .map(([x, y, r]) => `<g transform="translate(${x} ${y}) rotate(${r})">${arrow}</g>`).join('');

const colors = ('000000 1a1a1a 333333 4d4d4d 666666 808080 999999 b3b3b3 cccccc e6e6e6 ececec f2f2f2 f9f9f9 ffffff ' +
  '800000 ff0000 808000 ffff00 008000 00ff00 008080 00ffff 000080 0000ff 800080 ff00ff ' +
  '2b0000 550000 800000 aa0000 d40000 ff0000 ff2a2a ff5555 ff8080 ffaaaa ffd5d5 ' +
  '280b0b 501616 782121 a02c2c c83737 d35f5f de8787 e9afaf f4d7d7 241c1c 483737 6c5353 916f6f ac9393 c8b7b7 e3dbdb ' +
  '2b1100 552200 803300 aa4400 d45500 ff6600 ff7f2a ff9955 ffb380 ffccaa ffe6d5 ' +
  '28170b 502d16 784421 a05a2c c87137 d38d5f deaa87 e9c6af f4e3d7 241f1c').split(' ');
document.getElementById('palette').insertAdjacentHTML('beforeend',
  colors.map(c => `<button aria-label="#${c}" class="min-w-0 flex-1" style="background:#${c}"></button>`).join(''));
</script>
</body>
</html>
